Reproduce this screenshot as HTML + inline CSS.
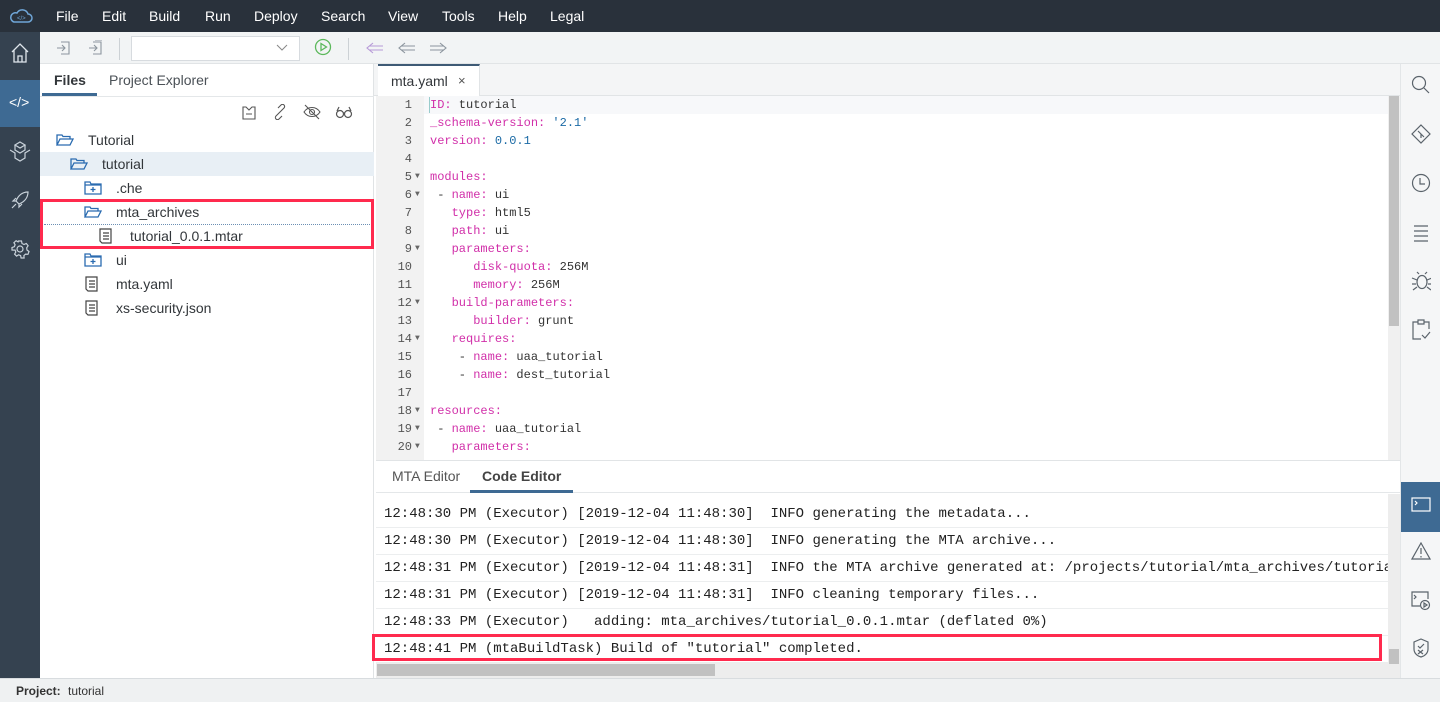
<!DOCTYPE html>
<html><head><meta charset="utf-8"><style>
*{box-sizing:border-box;margin:0;padding:0}
body{width:1440px;height:702px;overflow:hidden;font-family:"Liberation Sans",sans-serif;background:#fff;position:relative;color:#32363a}
.abs{position:absolute}
#top{left:0;top:0;width:1440px;height:32px;background:#29313b;color:#fff;font-size:14px}
#top span{position:absolute;top:8px}
#lbar{left:0;top:32px;width:40px;height:646px;background:#354250}
#toolbar{left:40px;top:32px;width:1400px;height:32px;background:#f2f4f5;border-bottom:1px solid #e1e4e6}
#files{left:40px;top:64px;width:334px;height:614px;background:#fff;border-right:1px solid #e0e3e5}
.tabs{font-size:14px}
.row{position:absolute;left:0;width:334px;height:24px;font-size:14px;line-height:24px}
.ln{position:absolute;left:376px;width:48px;font:12px "Liberation Mono",monospace;color:#555}
.ln div{height:18px;line-height:18px;position:relative}
.ln b{position:absolute;right:12px;font-weight:normal}
.ln i{position:absolute;left:39px;top:0;font-style:normal;font-size:8px;color:#666}
.cl{position:absolute;left:430px;font:12px "Liberation Mono",monospace;color:#333;white-space:pre}
.k{color:#d12fa9}.n{color:#1b6aa5}
#rbar{left:1400px;top:64px;width:40px;height:614px;background:#f5f6f7;border-left:1px solid #e3e6e8}
#status{left:0;top:678px;width:1440px;height:24px;background:#eff1f2;border-top:1px solid #d8dcdf;font-size:12px}
.con{position:absolute;left:376px;width:1012px;height:27px;border-bottom:1px solid #eceeef;font:14px "Liberation Mono",monospace;line-height:27px;padding-left:8px;white-space:pre;overflow:hidden;color:#222}
svg{position:absolute}
</style></head><body>
<div id="top" class="abs">
<svg style="left:9px;top:8px" width="24" height="16" viewBox="0 0 24 16"><path d="M5 14h14a4 4 0 0 0 0-8 6 6 0 0 0-11-1A4.5 4.5 0 0 0 5 14z" fill="none" stroke="#6fa6d8" stroke-width="1.5"/><text x="8" y="12" font-size="6" fill="#6fa6d8" font-family="Liberation Sans">&lt;/&gt;</text></svg>
<span style="left:56px">File</span><span style="left:102px">Edit</span><span style="left:149px">Build</span><span style="left:205px">Run</span><span style="left:254px">Deploy</span><span style="left:321px">Search</span><span style="left:388px">View</span><span style="left:442px">Tools</span><span style="left:498px">Help</span><span style="left:550px">Legal</span>
</div>
<div id="lbar" class="abs">
<svg style="left:10px;top:10px" width="20" height="22" viewBox="0 0 20 22" fill="none" stroke="#dfe6ec" stroke-width="1.3"><path d="M2 10L10 2l8 8M4 8v12h12V8M8 20v-6h4v6"/></svg>
<div class="abs" style="left:0;top:48px;width:40px;height:47px;background:#3e6a93"></div>
<div class="abs" style="left:9px;top:62px;color:#fff;font-size:14px">&lt;/&gt;</div>
<svg style="left:8px;top:108px" width="24" height="22" viewBox="0 0 24 22" fill="none" stroke="#c9d2da" stroke-width="1.2"><path d="M12 2l5 3-5 3-5-3zM7 5v5l5 3 5-3V5M2 10l5 3v5l5 3 5-3v-5l5-3"/></svg>
<svg style="left:10px;top:158px" width="20" height="20" viewBox="0 0 20 20" fill="none" stroke="#c9d2da" stroke-width="1.2"><path d="M18 2c-6 0-10 4-12 9l3 3c5-2 9-6 9-12zM6 11l-3 0 3-3M9 14v3l3-3M2 18l4-4"/></svg>
<svg style="left:10px;top:207px" width="20" height="20" viewBox="0 0 20 20" fill="none" stroke="#c9d2da" stroke-width="1.2"><circle cx="10" cy="10" r="3"/><path d="M8.5 2h3l.5 2.5 2 1 2.3-1 1.8 2.3-1.4 2 .3 2.2 2 1.5-1 2.8-2.4-.2-1.7 1.5.2 2.4h-3l-.5-2.4-2-.8-2 1.3-2-2 1.2-2-.7-2L2 11V8.5l2.4-.8.7-2-1.2-2 2.2-2 2 1.2z"/></svg>
</div>
<div id="toolbar" class="abs">
<svg style="left:16px;top:8px" width="16" height="16" fill="none" stroke="#8c959e" stroke-width="1.1"><path d="M5 2h8v12H5M1 8h8M6 5l3 3-3 3"/></svg>
<svg style="left:48px;top:8px" width="16" height="16" fill="none" stroke="#8c959e" stroke-width="1.1"><path d="M5 2h8v12H5M1 8h8M6 5l3 3-3 3M7 0h7"/></svg>
<div class="abs" style="left:79px;top:6px;width:1px;height:22px;background:#ccd1d5"></div>
<div class="abs" style="left:91px;top:4px;width:169px;height:25px;background:#fff;border:1px solid #d7dbdf"></div>
<svg style="left:236px;top:12px" width="12" height="8" fill="none" stroke="#888"><path d="M1 1l5 5 5-5"/></svg>
<svg style="left:274px;top:6px" width="18" height="18" fill="none" stroke="#5cb85c" stroke-width="1.3"><circle cx="9" cy="9" r="7.5"/><path d="M7 5.5v7l5.5-3.5z"/></svg>
<div class="abs" style="left:308px;top:6px;width:1px;height:22px;background:#ccd1d5"></div>
<svg style="left:326px;top:9px" width="18" height="14" fill="none" stroke="#b79ad8" stroke-width="1.1"><path d="M7 2L1 7l6 5M3 5h14M3 9h14"/></svg>
<svg style="left:358px;top:9px" width="18" height="14" fill="none" stroke="#8c959e" stroke-width="1.1"><path d="M7 2L1 7l6 5M3 5h14M3 9h14"/></svg>
<svg style="left:389px;top:9px" width="18" height="14" fill="none" stroke="#8c959e" stroke-width="1.1"><path d="M11 2l6 5-6 5M15 5H1M15 9H1"/></svg>
</div>
<div id="files" class="abs">
<div class="abs tabs" style="left:14px;top:8px;font-weight:bold;color:#32363a">Files</div>
<div class="abs tabs" style="left:69px;top:8px;color:#4b5157">Project Explorer</div>
<div class="abs" style="left:2px;top:29px;width:55px;height:3px;background:#3e6a93"></div>
<div class="abs" style="left:0;top:32px;width:334px;height:1px;background:#e4e7e9"></div>
<svg style="left:200px;top:40px" width="18" height="16" fill="none" stroke="#555" stroke-width="1.1"><path d="M3 3h3l3 3 3-3h3v12H3zM6 10h6"/></svg>
<svg style="left:232px;top:40px" width="16" height="16" fill="none" stroke="#555" stroke-width="1.1"><path d="M7 9l-3 3a2 2 0 0 0 3 3l3-3M9 7l3-3a2 2 0 0 0-3-3L6 4M6 10l4-4"/></svg>
<svg style="left:263px;top:40px" width="18" height="16" fill="none" stroke="#555" stroke-width="1.1"><path d="M1 8c4-6 12-6 16 0-4 6-12 6-16 0zM2 1l14 14"/><circle cx="9" cy="8" r="2.5"/></svg>
<svg style="left:295px;top:41px" width="18" height="14" fill="none" stroke="#555" stroke-width="1.2"><circle cx="5" cy="9" r="3.5"/><circle cx="13" cy="9" r="3.5"/><path d="M2 6l2-4M16 6l-2-4M8.5 8h1"/></svg>
<div class="row" style="top:64px"><span class="abs" style="left:48px">Tutorial</span></div>
<div class="row" style="top:88px;background:#e8eff5"><span class="abs" style="left:62px">tutorial</span></div>
<div class="row" style="top:112px"><span class="abs" style="left:76px">.che</span></div>
<div class="row" style="top:136px"><span class="abs" style="left:76px">mta_archives</span></div>
<div class="row" style="top:160px"><span class="abs" style="left:90px">tutorial_0.0.1.mtar</span></div>
<div class="row" style="top:184px"><span class="abs" style="left:76px">ui</span></div>
<div class="row" style="top:208px"><span class="abs" style="left:76px">mta.yaml</span></div>
<div class="row" style="top:232px"><span class="abs" style="left:76px">xs-security.json</span></div>
<div class="abs" style="left:4px;top:160px;width:326px;border-top:1px dotted #6c8fb3"></div>
<div class="abs" style="left:0;top:135px;width:334px;height:50px;border:3px solid #ff2a4e"></div>
<svg style="left:16px;top:69px" width="18" height="14" fill="none" stroke="#2a6bb0" stroke-width="1.3"><path d="M1 12V2h5l1 1.5h7V6M1 12l3-6h13l-3 6z"/></svg>
<svg style="left:30px;top:93px" width="18" height="14" fill="none" stroke="#2a6bb0" stroke-width="1.3"><path d="M1 12V2h5l1 1.5h7V6M1 12l3-6h13l-3 6z"/></svg>
<svg style="left:44px;top:141px" width="18" height="14" fill="none" stroke="#2a6bb0" stroke-width="1.3"><path d="M1 12V2h5l1 1.5h7V6M1 12l3-6h13l-3 6z"/></svg>
<svg style="left:44px;top:117px" width="18" height="14" fill="none" stroke="#2a6bb0" stroke-width="1.3"><path d="M1 1h5l1 2h10v10H1zM1 4h16M9 6v5M6.5 8.5h5"/></svg>
<svg style="left:44px;top:189px" width="18" height="14" fill="none" stroke="#2a6bb0" stroke-width="1.3"><path d="M1 1h5l1 2h10v10H1zM1 4h16M9 6v5M6.5 8.5h5"/></svg>
<svg style="left:59px;top:164px" width="14" height="16" fill="none" stroke="#444" stroke-width="1.2"><path d="M1 1h11v14H3l-2-2zM4 5h6M4 8h6M4 11h6"/></svg>
<svg style="left:45px;top:212px" width="14" height="16" fill="none" stroke="#444" stroke-width="1.2"><path d="M1 1h11v14H3l-2-2zM4 5h6M4 8h6M4 11h6"/></svg>
<svg style="left:45px;top:236px" width="14" height="16" fill="none" stroke="#444" stroke-width="1.2"><path d="M1 1h11v14H3l-2-2zM4 5h6M4 8h6M4 11h6"/></svg>
</div>
<div class="abs" style="left:374px;top:64px;width:1026px;height:32px;background:#f4f5f6;border-bottom:1px solid #e1e4e6"></div>
<div class="abs" style="left:378px;top:64px;width:102px;height:33px;background:#fff;border-top:2px solid #3e5a75;border-right:1px solid #e1e4e6"></div>
<div class="abs" style="left:391px;top:73px;font-size:14px">mta.yaml</div>
<div class="abs" style="left:458px;top:73px;font-size:13px;color:#555">×</div>
<div class="abs" style="left:376px;top:96px;width:48px;height:364px;background:#f2f2f2"></div>
<div class="abs" style="left:1388px;top:96px;width:12px;height:364px;background:#f0f0f0"></div>
<div class="abs" style="left:1389px;top:96px;width:10px;height:230px;background:#c1c1c1"></div>
<div class="abs" style="left:424px;top:96px;width:964px;height:18px;background:#f7f8fa"></div>
<div class="abs" style="left:429px;top:97px;width:1px;height:16px;background:#9cc"></div>
<div class="ln" style="top:96px">
<div><b>1</b></div><div><b>2</b></div><div><b>3</b></div><div><b>4</b></div><div><b>5</b><i>▼</i></div><div><b>6</b><i>▼</i></div><div><b>7</b></div><div><b>8</b></div><div><b>9</b><i>▼</i></div><div><b>10</b></div><div><b>11</b></div><div><b>12</b><i>▼</i></div><div><b>13</b></div><div><b>14</b><i>▼</i></div><div><b>15</b></div><div><b>16</b></div><div><b>17</b></div><div><b>18</b><i>▼</i></div><div><b>19</b><i>▼</i></div><div><b>20</b><i>▼</i></div>
</div>
<div class="cl" style="top:96px;line-height:18px"><span class="k">ID:</span> tutorial
<span class="k">_schema-version:</span> <span class="n">'2.1'</span>
<span class="k">version:</span> <span class="n">0.0.1</span>

<span class="k">modules:</span>
 - <span class="k">name:</span> ui
   <span class="k">type:</span> html5
   <span class="k">path:</span> ui
   <span class="k">parameters:</span>
      <span class="k">disk-quota:</span> 256M
      <span class="k">memory:</span> 256M
   <span class="k">build-parameters:</span>
      <span class="k">builder:</span> grunt
   <span class="k">requires:</span>
    - <span class="k">name:</span> uaa_tutorial
    - <span class="k">name:</span> dest_tutorial

<span class="k">resources:</span>
 - <span class="k">name:</span> uaa_tutorial
   <span class="k">parameters:</span></div>
<div class="abs" style="left:376px;top:460px;width:1024px;height:33px;background:#fff;border-top:1px solid #e1e4e6;border-bottom:1px solid #e4e7e9"></div>
<div class="abs" style="left:392px;top:468px;font-size:14px;color:#555">MTA Editor</div>
<div class="abs" style="left:482px;top:468px;font-size:14px;font-weight:bold;color:#444">Code Editor</div>
<div class="abs" style="left:470px;top:490px;width:103px;height:3px;background:#3e6a93"></div>
<div class="abs" style="left:376px;top:494px;width:1012px;height:168px;background:#fff"></div>
<div class="con" style="top:501px">12:48:30 PM (Executor) [2019-12-04 11:48:30]  INFO generating the metadata...</div>
<div class="con" style="top:528px">12:48:30 PM (Executor) [2019-12-04 11:48:30]  INFO generating the MTA archive...</div>
<div class="con" style="top:555px">12:48:31 PM (Executor) [2019-12-04 11:48:31]  INFO the MTA archive generated at: /projects/tutorial/mta_archives/tutorial_0.0.1.mtar</div>
<div class="con" style="top:582px">12:48:31 PM (Executor) [2019-12-04 11:48:31]  INFO cleaning temporary files...</div>
<div class="con" style="top:609px">12:48:33 PM (Executor)   adding: mta_archives/tutorial_0.0.1.mtar (deflated 0%)</div>
<div class="con" style="top:636px;border:none">12:48:41 PM (mtaBuildTask) Build of "tutorial" completed.</div>
<div class="abs" style="left:372px;top:634px;width:1010px;height:27px;border:3px solid #ff2a4e"></div>
<div class="abs" style="left:1388px;top:494px;width:12px;height:184px;background:#ededed"></div>
<div class="abs" style="left:1389px;top:649px;width:10px;height:15px;background:#c1c1c1"></div>
<div class="abs" style="left:376px;top:662px;width:1012px;height:16px;background:#ededed"></div>
<div class="abs" style="left:377px;top:664px;width:338px;height:12px;background:#c1c1c1"></div>
<div id="rbar" class="abs">
<svg style="left:10px;top:11px" width="20" height="20" fill="none" stroke="#5a636b" stroke-width="1.2"><circle cx="8" cy="8" r="6.5"/><path d="M13 13l5 5"/></svg>
<svg style="left:10px;top:60px" width="20" height="20" fill="none" stroke="#5a636b" stroke-width="1.2"><path d="M10 1l9 9-9 9-9-9zM7 7l6 6M10 10v4"/></svg>
<svg style="left:10px;top:109px" width="20" height="20" fill="none" stroke="#5a636b" stroke-width="1.2"><circle cx="10" cy="10" r="8.5"/><path d="M9 5v6h5"/></svg>
<svg style="left:10px;top:160px" width="20" height="18" fill="none" stroke="#5a636b" stroke-width="1.2"><path d="M3 2h14M3 7h14M3 12h14M3 17h14"/></svg>
<svg style="left:10px;top:207px" width="20" height="20" fill="none" stroke="#5a636b" stroke-width="1.2"><ellipse cx="11" cy="11" rx="5" ry="6.5"/><path d="M1 7l5 2M1 13h4M2 19l4-3M21 7l-5 2M21 13h-4M20 19l-4-3M8 3l-2-2M14 3l2-2"/></svg>
<svg style="left:10px;top:255px" width="20" height="22" fill="none" stroke="#5a636b" stroke-width="1.2"><path d="M7 3H2v17h8M13 3h5v7M7 1h6v4H7zM11 16l3 3 5-6"/></svg>
<div class="abs" style="left:0;top:418px;width:40px;height:50px;background:#3e6a93"></div>
<svg style="left:10px;top:433px" width="20" height="16" fill="none" stroke="#fff" stroke-width="1.2"><rect x="1" y="1" width="18" height="13"/><path d="M4 4l2 2-2 2"/></svg>
<svg style="left:10px;top:478px" width="20" height="18" fill="none" stroke="#5a636b" stroke-width="1.2"><path d="M10 1l9 16H1zM10 6v6M10 14v1.5"/></svg>
<svg style="left:10px;top:527px" width="20" height="20" fill="none" stroke="#5a636b" stroke-width="1.2"><path d="M9 15H1V1h16v7M3 4l2 2-2 2"/><circle cx="14" cy="14" r="4.5"/><path d="M13 12v4l3-2z"/></svg>
<svg style="left:11px;top:574px" width="18" height="20" fill="none" stroke="#5a636b" stroke-width="1.2"><path d="M9 1l7 3v7c0 4-3 7-7 8-4-1-7-4-7-8V4zM6 8l2 2 4-4M6 12l5 4M11 12l-5 4"/></svg>
</div>
<div id="status" class="abs"><span class="abs" style="left:16px;top:5px;font-weight:bold;color:#333">Project:</span><span class="abs" style="left:68px;top:5px;color:#333">tutorial</span></div>
</body></html>
